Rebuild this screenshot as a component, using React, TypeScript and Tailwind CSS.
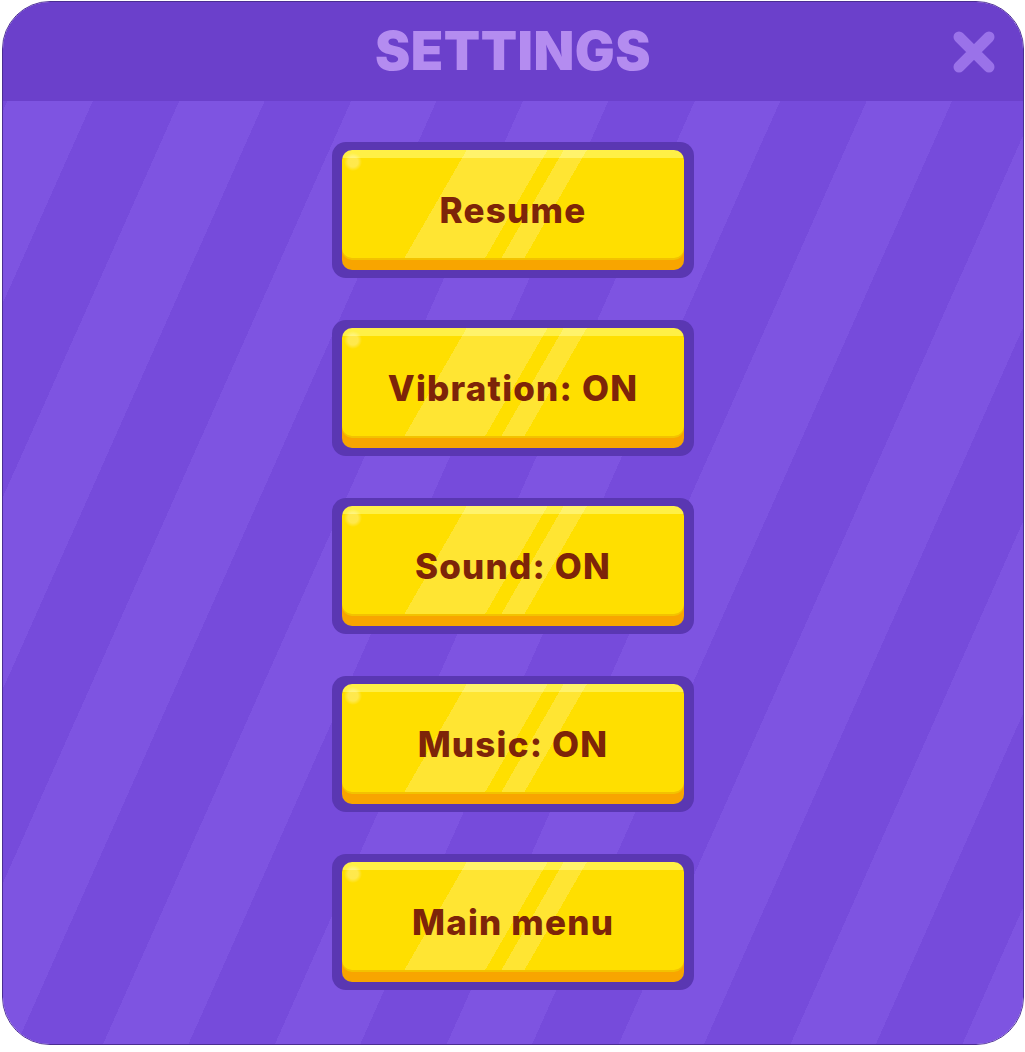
import React from "react";

const items = ["Resume", "Vibration: ON", "Sound: ON", "Music: ON", "Main menu"];

function GameButton({ label }: { label: string }) {
  return (
    <div className="w-[362px] h-[136px] rounded-[14px] bg-[#5a37b2] pt-[8px] pb-[8px] pl-[10px] pr-[10px]">
      <button
        type="button"
        className="w-full h-full rounded-[10px] flex items-center justify-center bg-[radial-gradient(circle_at_11px_12px,rgba(255,255,255,0.3)_0_5px,transparent_9px),linear-gradient(120deg,transparent_0_108px,rgba(255,255,255,0.2)_108px_178px,transparent_178px_192px,rgba(255,255,255,0.2)_192px_212px,transparent_212px),linear-gradient(to_bottom,#fff046_0_8px,#ffdf00_8px)] shadow-[inset_0_-10px_0_#f8a500,inset_0_-12px_0_#f3c200]"
      >
        <span
          className="text-[35px] font-extrabold text-[#7d2409] tracking-[1.2px] leading-none"
          style={{ fontFamily: "Inter, 'Noto Sans', sans-serif" }}
        >
          {label}
        </span>
      </button>
    </div>
  );
}

export default function App() {
  return (
    <div className="min-h-screen bg-white pt-[1px] pl-[2px]">
      <div className="w-[1022px] h-[1044px] rounded-[48px] overflow-hidden border border-[#4b2e91] flex flex-col">
        <div className="h-[99px] bg-[#6b40cb] grid grid-cols-[1fr_auto_1fr] items-center">
          <div />
          <h1
            className="text-[53px] font-black text-[#b48cf0] tracking-[0.5px] leading-none"
            style={{ fontFamily: "Inter, 'Noto Sans', sans-serif" }}
          >
            SETTINGS
          </h1>
          <div className="flex justify-end pr-[28px]">
            <svg width="42" height="42" viewBox="0 0 42 42" aria-label="Close">
              <path
                d="M6 6 L36 36 M36 6 L6 36"
                stroke="#9a72e9"
                strokeWidth="11"
                strokeLinecap="round"
                fill="none"
              />
            </svg>
          </div>
        </div>
        <div className="flex-1 flex flex-col items-center pt-[41px] gap-[42px] bg-[repeating-linear-gradient(114deg,#764bdb_0px_4px,#7e54e1_4px_82px,#764bdb_82px_157px)]">
          {items.map((l) => (
            <GameButton key={l} label={l} />
          ))}
        </div>
      </div>
    </div>
  );
}
